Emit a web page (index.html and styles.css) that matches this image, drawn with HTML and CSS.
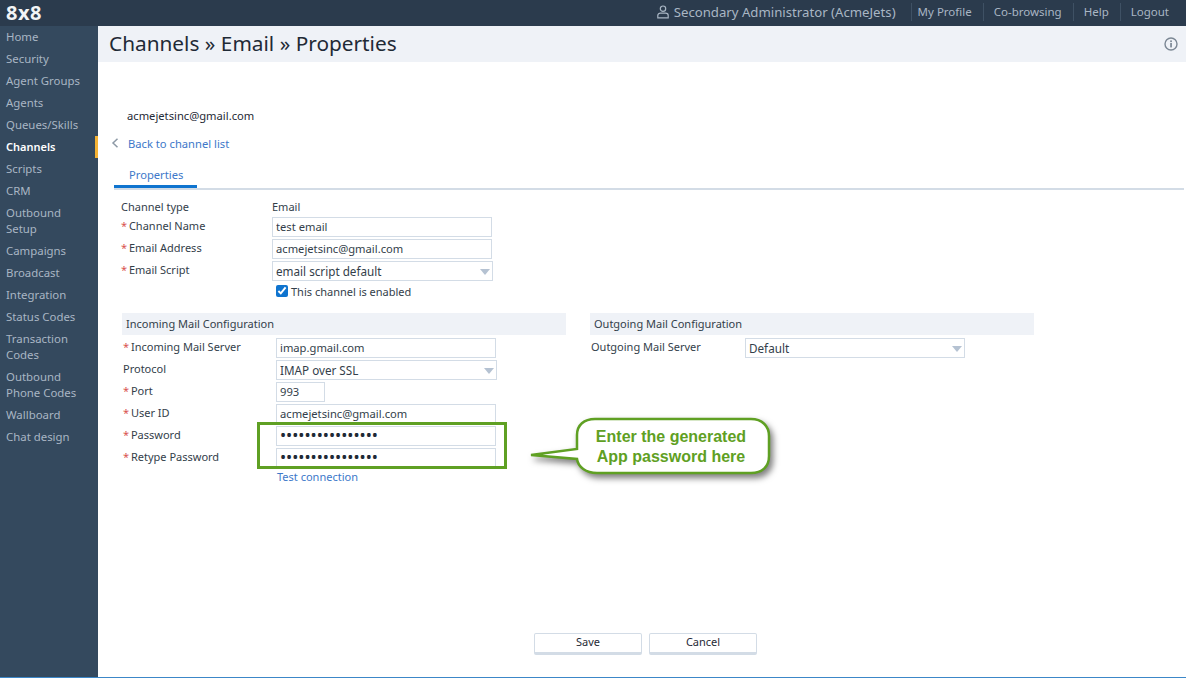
FILE: index.html
```html
<!DOCTYPE html>
<html>
<head>
    <meta name="viewport" content="width=device-width, initial-scale=1">
    <link rel="stylesheet" href="styles.css">
</head>
<body>

<div class="topbar">
    <div class="logo">8x8</div>
    <div class="user">
        <svg class="user-icon" width="12" height="14" viewBox="0 0 12 14">
            <circle cx="6" cy="3.7" r="2.7" fill="none" stroke="#a9b6c4" stroke-width="1.2"/>
            <path d="M0.8 12.9V10.4C0.8 9 2 8.2 3.4 8.2H8.6C10 8.2 11.2 9 11.2 10.4V12.9Z" fill="none" stroke="#a9b6c4" stroke-width="1.2"/>
        </svg>
        Secondary Administrator (AcmeJets)
    </div>
    <a href="#profile" class="toplink first">My Profile</a>
    <a href="#cobrowse" class="toplink">Co-browsing</a>
    <a href="#help" class="toplink">Help</a>
    <a href="#logout" class="toplink">Logout</a>
</div>

<div class="layout">
    <div class="sidebar">
        <a href="#">Home</a>
        <a href="#">Security</a>
        <a href="#">Agent Groups</a>
        <a href="#">Agents</a>
        <a href="#">Queues/Skills</a>
        <a href="#" class="active">Channels</a>
        <a href="#">Scripts</a>
        <a href="#">CRM</a>
        <a href="#">Outbound Setup</a>
        <a href="#">Campaigns</a>
        <a href="#">Broadcast</a>
        <a href="#">Integration</a>
        <a href="#">Status Codes</a>
        <a href="#">Transaction Codes</a>
        <a href="#">Outbound Phone Codes</a>
        <a href="#">Wallboard</a>
        <a href="#">Chat design</a>
    </div>

    <div class="main">
        <div class="titlebar">
            <h1>Channels » Email » Properties</h1>
            <svg width="14" height="14" viewBox="0 0 14 14">
                <circle cx="7" cy="7" r="6" fill="none" stroke="#7b8794" stroke-width="1.4"/>
                <rect x="6.2" y="6" width="1.7" height="4.4" fill="#7b8794"/>
                <rect x="6.2" y="3.4" width="1.7" height="1.7" fill="#7b8794"/>
            </svg>
        </div>

        <div class="content">
            <div class="channel-email">acmejetsinc@gmail.com</div>
            <div class="back">
                <svg width="8" height="10" viewBox="0 0 8 10">
                    <path d="M6.5 0.7L2 5L6.5 9.3" fill="none" stroke="#8d99a6" stroke-width="1.5"/>
                </svg>
                <a href="#back">Back to channel list</a>
            </div>
            <div class="tabs"><a href="#properties" class="tab">Properties</a></div>

            <form class="form" action="">
                <div class="row first-row">
                    <span class="label">Channel type</span>
                    <span class="value">Email</span>
                </div>
                <div class="row">
                    <label class="label"><i>*</i> Channel Name</label>
                    <input type="text" value="test email">
                </div>
                <div class="row">
                    <label class="label"><i>*</i> Email Address</label>
                    <input type="text" value="acmejetsinc@gmail.com">
                </div>
                <div class="row">
                    <label class="label"><i>*</i> Email Script</label>
                    <div class="select"><select><option>email script default</option></select></div>
                </div>
                <div class="check">
                    <input type="checkbox" checked>
                    <span>This channel is enabled</span>
                </div>

                <div class="mail-cols">
                    <div class="mail-col incoming">
                        <div class="section">Incoming Mail Configuration</div>
                        <div class="row">
                            <label class="label"><i>*</i> Incoming Mail Server</label>
                            <input type="text" value="imap.gmail.com">
                        </div>
                        <div class="row">
                            <label class="label">Protocol</label>
                            <div class="select"><select><option>IMAP over SSL</option></select></div>
                        </div>
                        <div class="row">
                            <label class="label"><i>*</i> Port</label>
                            <input type="text" class="port" value="993">
                        </div>
                        <div class="row">
                            <label class="label"><i>*</i> User ID</label>
                            <input type="text" value="acmejetsinc@gmail.com">
                        </div>
                        <div class="row">
                            <label class="label"><i>*</i> Password</label>
                            <input type="password" value="abcdefghijklmnop">
                        </div>
                        <div class="row">
                            <label class="label"><i>*</i> Retype Password</label>
                            <input type="password" value="abcdefghijklmnop">
                        </div>
                        <a href="#test" class="test">Test connection</a>
                    </div>
                    <div class="mail-col outgoing">
                        <div class="section">Outgoing Mail Configuration</div>
                        <div class="row">
                            <label class="label">Outgoing Mail Server</label>
                            <div class="select"><select><option>Default</option></select></div>
                        </div>
                    </div>
                </div>
            </form>

            <div class="actions">
                <button type="button">Save</button>
                <button type="button">Cancel</button>
            </div>
        </div>

        <!-- annotation drawn over the screenshot -->
        <div class="highlight"></div>
        <div class="callout">
            <svg width="250" height="66" viewBox="0 0 250 66">
                <path class="bubble" d="M2 38L48 32V18C48 8 55 2 66 2H222C233 2 240 9 240 19V39C240 50 233 56 222 56H68C57 56 49 50 48 42Z"/>
            </svg>
            <div class="callout-text">Enter the generated<br>App password here</div>
        </div>
    </div>
</div>
<div class="strip"></div>

</body>
</html>
```

FILE: styles.css
```css
* {
  box-sizing: border-box;
}

html, body {
  height: 100%;
}

body {
  margin: 0;
  overflow: hidden;
  font-family: "Noto Sans", "Open Sans", Arial, sans-serif;
  font-size: 11.2px;
  color: #333e4a;
  background: #fff;
}

a {
  text-decoration: none;
}

/* top bar */
.topbar {
  display: flex;
  align-items: center;
  height: 26px;
  padding: 0 6px 2px 0;
  background-color: #2b3b4d;
  color: #a9b6c4;
}

.logo {
  margin-left: 6px;
  margin-right: auto;
  font-family: "Open Sans", sans-serif;
  font-size: 20px;
  font-weight: 700;
  letter-spacing: 0.5px;
  color: #f2f4f6;
}

.user {
  display: flex;
  align-items: center;
  gap: 5px;
  margin-right: 15px;
  font-size: 13.2px;
}

.toplink {
  display: block;
  height: 18px;
  padding: 0 11px 0 10px;
  line-height: 18px;
  font-size: 11.5px;
  color: #a9b6c4;
  border-left: 1px solid #3f5164;
}

.toplink.first {
  padding-left: 6px;
}

/* left menu */
.layout {
  display: flex;
  height: 651px;
}

.sidebar {
  flex: none;
  width: 98px;
  background-color: #34495e;
}

.sidebar a {
  display: block;
  padding: 3px 6px;
  line-height: 16px;
  font-size: 11.4px;
  color: #a9b6c4;
}

.sidebar a.active {
  color: #fff;
  font-size: 11px;
  font-weight: 600;
  border-right: 3px solid #f5b335;
}

/* main part */
.main {
  position: relative;
  flex: 1;
  display: flex;
  flex-direction: column;
}

.titlebar {
  display: flex;
  align-items: center;
  justify-content: space-between;
  height: 36px;
  padding: 0 8px 2px 11px;
  background-color: #eff2f7;
}

.titlebar h1 {
  margin: 0;
  font-size: 20.8px;
  font-weight: 400;
  color: #1f2a36;
}

.titlebar svg {
  margin-top: 2px;
}

.content {
  flex: 1;
  display: flex;
  flex-direction: column;
  padding-left: 16px;
}

.channel-email {
  margin: 46px 0 0 13px;
  line-height: 16px;
  color: #1f2a36;
}

.back {
  display: flex;
  align-items: center;
  gap: 9px;
  margin-top: 11px;
  margin-left: -3px;
  height: 16px;
}

.back a, .test {
  color: #3d78c9;
}

.tabs {
  width: 1070px;
  height: 27px;
  margin-top: 12px;
  border-bottom: 2px solid #d3dce6;
}

.tab {
  display: block;
  width: 83px;
  height: 25px;
  padding: 4px 0 0 15px;
  line-height: 16px;
  color: #3d78c9;
  border-bottom: 3px solid #0f74cf;
}

/* form */
.form {
  margin-top: 8px;
  margin-left: 7px;
}

.row {
  display: flex;
  align-items: flex-start;
  height: 22px;
}

.first-row {
  height: 19px;
}

.label {
  flex: none;
  width: 151px;
  line-height: 16px;
  margin-top: 1px;
  font-size: 11px;
}

.label i {
  margin-right: -1px;
  font-style: normal;
  color: #d9534f;
}

.value {
  line-height: 16px;
  margin-top: 1px;
  font-size: 11px;
}

input[type=text], input[type=password] {
  width: 220px;
  height: 20px;
  padding: 0 3px 2px;
  border: 1px solid #d3dce6;
  border-radius: 0;
  font: inherit;
  color: #333e4a;
  background: #fff;
}

input[type=password] {
  font-size: 16.3px;
  color: #1f2a36;
}

input.port {
  width: 49px;
}

.select {
  position: relative;
  width: 221px;
  height: 20px;
}

.outgoing .select {
  width: 220px;
}

.select select {
  width: 100%;
  height: 100%;
  padding: 0 3px 1px;
  border: 1px solid #d3dce6;
  border-radius: 0;
  font: inherit;
  font-size: 11.7px;
  color: #333e4a;
  background: #fff;
  appearance: none;
}

.select:after {
  content: "";
  position: absolute;
  right: 3px;
  top: 8px;
  border-left: 5px solid transparent;
  border-right: 5px solid transparent;
  border-top: 6px solid #b5c2d2;
}

.check {
  display: flex;
  align-items: center;
  gap: 3px;
  height: 16px;
  margin: 0 0 0 155px;
  font-size: 11px;
}

.check input {
  width: 12px;
  height: 12px;
  margin: 0;
  accent-color: #0f74cf;
}

.mail-cols {
  display: flex;
  gap: 24px;
  margin-top: 14px;
  margin-left: 1px;
}

.mail-col {
  width: 444px;
}

.section {
  height: 22px;
  margin-bottom: 3px;
  padding-left: 4px;
  line-height: 22px;
  font-size: 11px;
  background-color: #eff2f7;
  color: #333e4a;
}

.incoming .label {
  width: 153px;
  margin-left: 1px;
}

.outgoing .label {
  width: 154px;
  margin-left: 1px;
}

.test {
  display: block;
  margin-left: 155px;
  margin-top: -1px;
  line-height: 16px;
  font-size: 11px;
}

/* buttons at the bottom */
.actions {
  display: flex;
  gap: 7px;
  margin-top: auto;
  margin-bottom: 22px;
  margin-left: 420px;
}

.actions button {
  width: 108px;
  height: 22px;
  padding: 0 0 4px;
  border: 1px solid #d3dce6;
  border-bottom: 3px solid #d3dce6;
  border-radius: 2px;
  font: inherit;
  font-size: 11px;
  color: #1f2a36;
  background: #fff;
}

.strip {
  height: 2px;
  background: #fff;
  border-top: 1px solid #3c87c8;
}

/* green annotation */
.highlight {
  position: absolute;
  left: 159px;
  top: 396px;
  width: 250px;
  height: 47px;
  border: 3px solid #5fa023;
}

.callout {
  position: absolute;
  left: 431px;
  top: 391px;
  width: 250px;
  height: 66px;
}

.callout svg {
  display: block;
  overflow: visible;
}

.bubble {
  fill: #fff;
  stroke: #5fa023;
  stroke-width: 2.5;
  filter: drop-shadow(3px 4px 3px rgba(0, 0, 0, 0.5));
}

.callout-text {
  position: absolute;
  left: 47px;
  top: 10px;
  width: 190px;
  text-align: center;
  font-family: "Liberation Sans", Arial, sans-serif;
  font-size: 16px;
  font-weight: 700;
  line-height: 20px;
  color: #5fa023;
}
```
